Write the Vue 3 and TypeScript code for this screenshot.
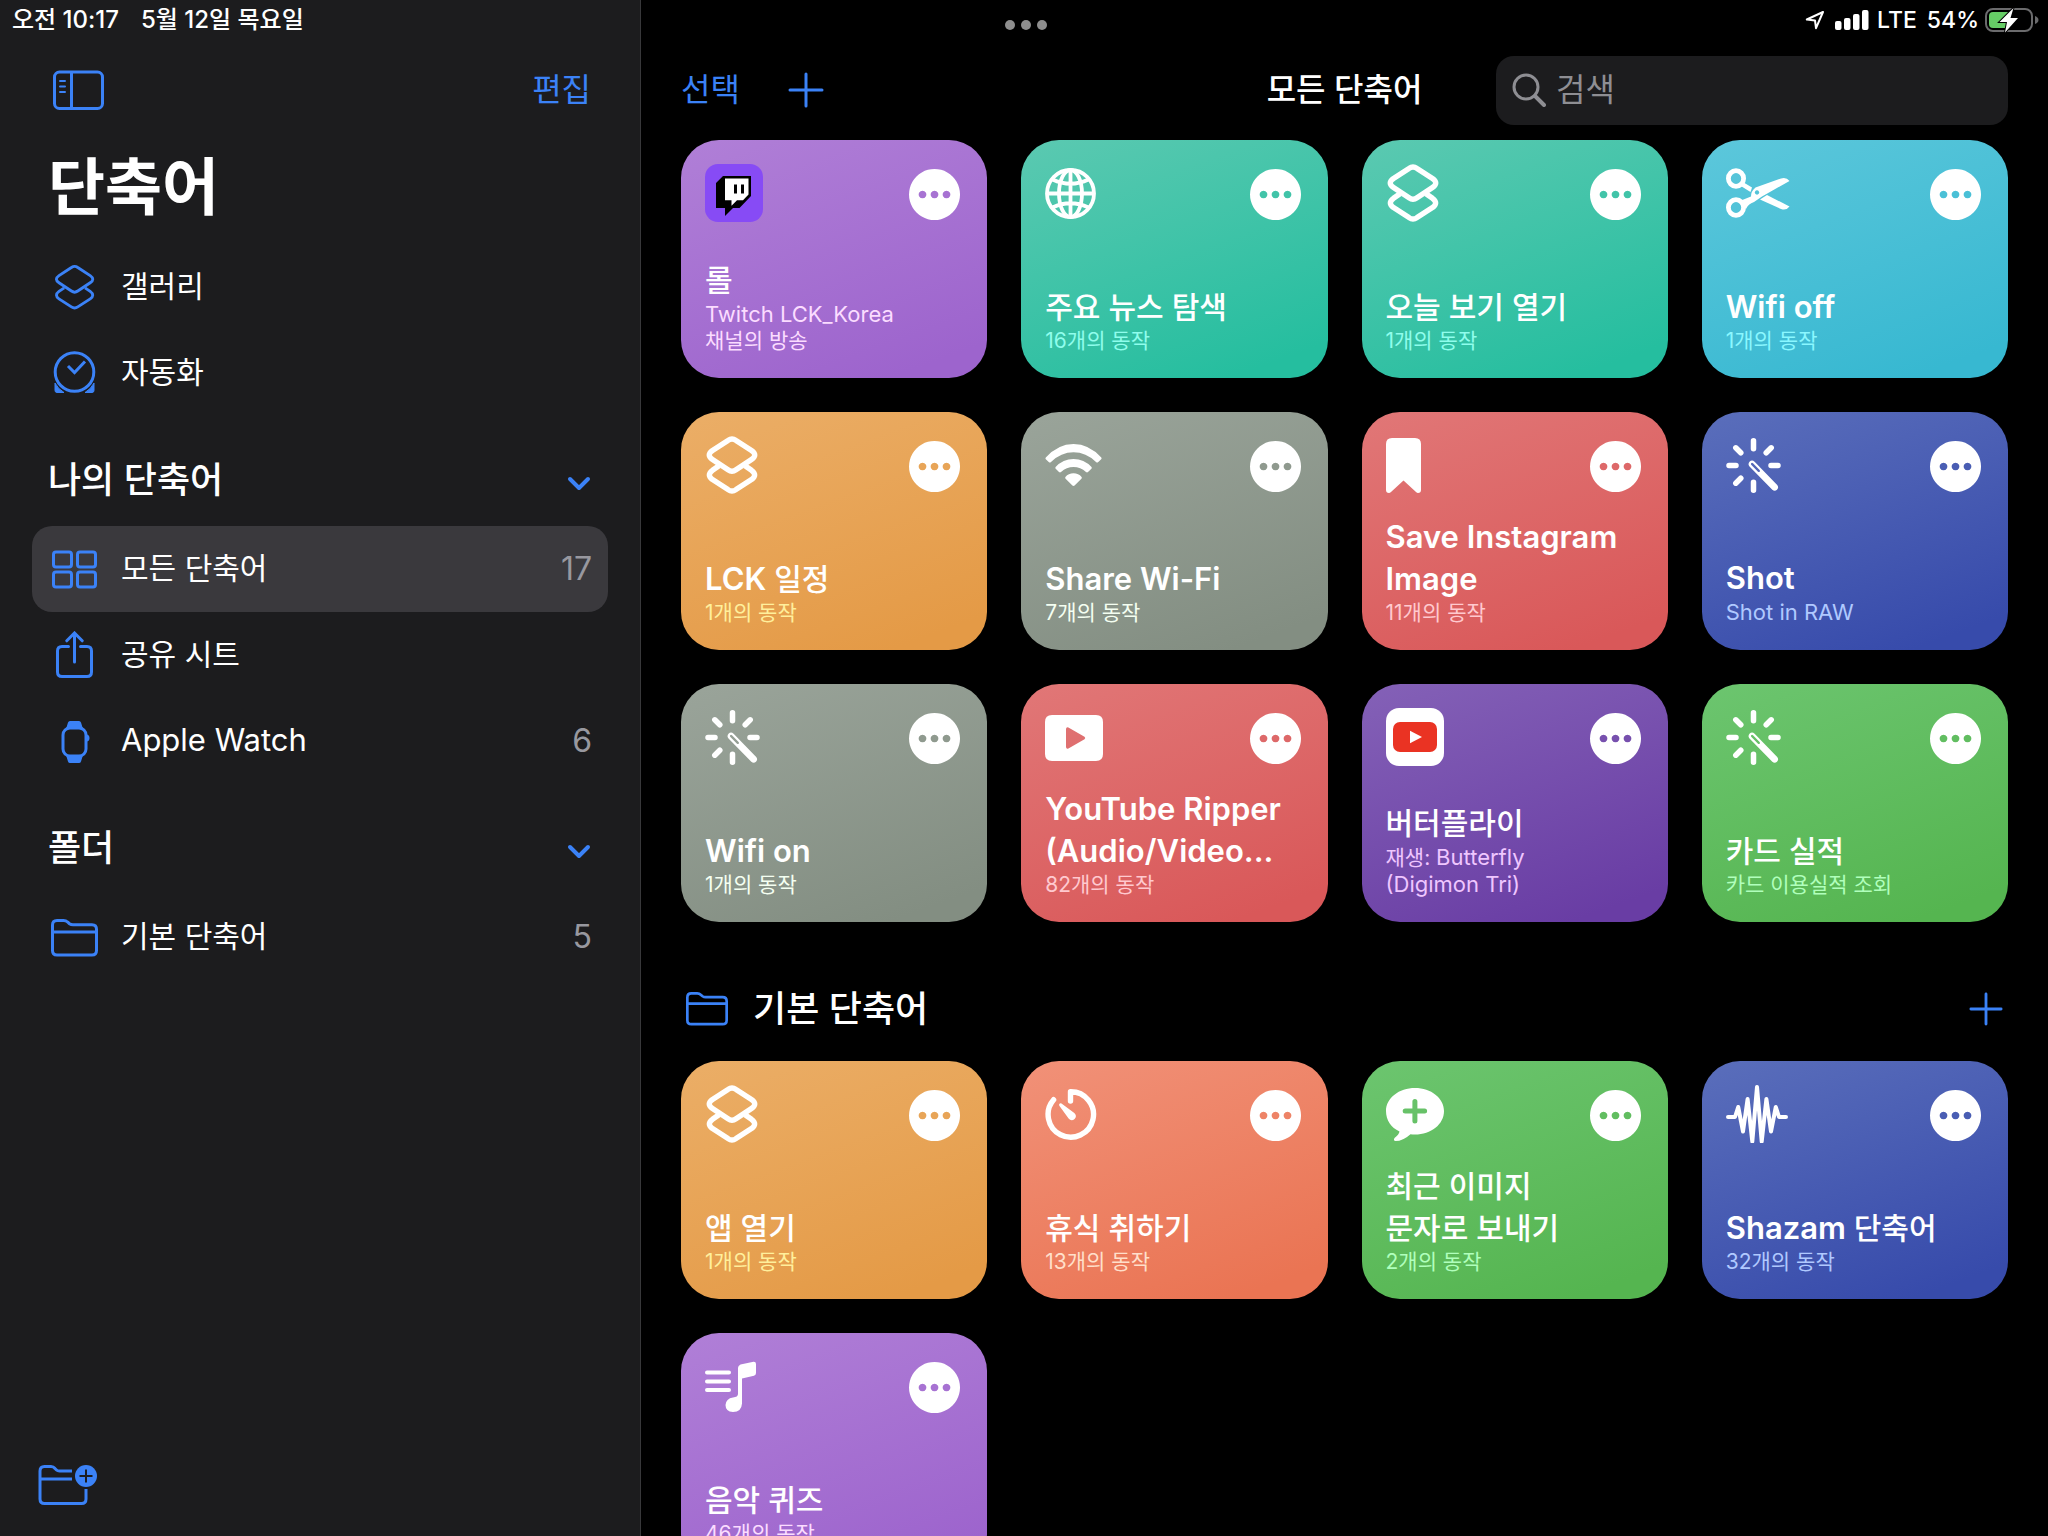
<script setup lang="ts">
import { ref } from 'vue'

interface Shortcut {
  title: string
  subtitle: string
  icon: string
  color: string
}

interface NavItem {
  label: string
  icon: string
  count?: number
  active?: boolean
}

const query = ref('')

// Splits a text into Latin and Hangul runs, which take slightly different sizes.
function runs(text: string): { text: string; latin: boolean }[] {
  return text
    .split(/([A-Za-z(][A-Za-z_()/.\- \n]*)/)
    .filter((part) => part !== '')
    .map((part) => ({ text: part, latin: /^[A-Za-z(]/.test(part) }))
}

const layers =
  '<path d="M23 4.400Q27 1.600 31 4.400L46.500 14.500Q53 19 46.500 23.500L31 33.800Q27 36.600 23 33.800L7.500 23.500Q1 19 7.500 14.500Z"/><path d="M14 29.800L7.500 34.300Q1.200 39 7.500 43.600L23 53.600Q27 56.400 31 53.600L46.500 43.600Q52.800 39 46.500 34.300L40 29.800"/>'

const wandRays =
  '<path d="M27.500 4.800v8M27.500 46.200v8M3 29.500h7M45 29.500h7M9.800 11.800l5 5M45.200 11.800l-5 5M9.800 47.200l5-5" fill="none" stroke="#fff" stroke-width="5.500" stroke-linecap="round"/>'

const cardIcons: Record<string, string> = {
  twitch:
    '<rect width="58" height="58" rx="13" fill="#874bf5"/><path d="M18 12H46V32L34.500 44H28L20 52V44H11V19Z" fill="#000"/><path d="M20 14.500H43.500V30.500L38 36.300H32L26.500 41.800V36.300H20Z" fill="#fff"/><path d="M29 20.500h3v9h-3zM36 20.500h3v9h-3z" fill="#000"/>',
  globe:
    '<g fill="none" stroke="#fff" stroke-width="3.800"><circle cx="25.500" cy="29.500" r="23.500"/><ellipse cx="25.500" cy="29.500" rx="11.500" ry="23.500"/><path d="M25.500 6v47M2 29.500h47M7.500 15.500Q25.500 24 43.500 15.500M7.500 43.500Q25.500 35 43.500 43.500"/></g>',
  layers: `<g fill="none" stroke="#fff" stroke-width="5.400" stroke-linejoin="round">${layers}</g>`,
  scissors:
    '<g fill="none" stroke="#fff" stroke-width="4.800"><ellipse cx="10" cy="14.500" rx="7.600" ry="7.800"/><ellipse cx="10" cy="43.500" rx="7.600" ry="7.800"/></g><path d="M16 17.500L26 23.500L24.500 28L14 21.500Z" fill="#fff"/><path fill-rule="evenodd" d="M15 36.500L25 32.500Q25 27 29.500 23.500L55 14.500Q60.500 13 63.500 17L36 32.500L28 38Q22 40 20 45Z M31 26.300a2.200 2.200 0 1 0 .01 0Z" fill="#fff"/><path d="M34 35.500L41 31L63.500 42.500Q60.500 46.800 55 45Z" fill="#fff"/>',
  wifi:
    '<path d="M.8 21.500Q13 8 28.500 8Q44 8 56.300 21.500Q57 22.500 56.200 23.300L53 26.300Q52 27 51 26Q41 16.300 28.500 16.300Q16 16.300 6 26Q5 27 4 26.300L.8 23.300Q0 22.500 .8 21.500Z M10.600 31Q18 23 28.500 23Q39 23 46.500 31Q47.200 32 46.400 32.800L43 36Q42 36.800 41 36Q35.500 30.900 28.500 30.900Q21.500 30.900 16 36Q15 36.800 14 36L10.700 32.800Q9.900 32 10.600 31Z M20.400 41Q23.500 37.300 28.500 37.300Q33.500 37.300 36.600 41Q37.200 42 36.400 42.800L29.600 49.500Q28.500 50.400 27.400 49.500L20.600 42.800Q19.800 42 20.400 41Z" fill="#fff"/>',
  bookmark:
    '<path d="M6 2H29Q35 2 35 8V54Q35 57 32 57Q31 57 30 56L17.500 44.500L5 56Q4 57 3 57Q0 57 0 54V8Q0 2 6 2Z" fill="#fff"/>',
  wand:
    wandRays +
    '<path fill-rule="evenodd" d="M23.500 25.700Q26 23.400 28.600 25.700L51.200 49Q53.200 51.500 51 53.700Q48.700 55.800 46.300 53.700L23.500 30.600Q21.500 28 23.500 25.700Z M25.200 27.200Q24.600 28 25.200 28.800L32 35.700Q33 36.300 33.700 35.700Q34.300 34.800 33.600 34L27 27.200Q26 26.500 25.200 27.200Z" fill="#fff"/>',
  play:
    '<path fill-rule="evenodd" d="M7 7H51Q58 7 58 14V46Q58 53 51 53H7Q0 53 0 46V14Q0 7 7 7Z M21 21V39Q21.300 41.300 23.400 40.400L39.500 31.300Q41 30 39.500 28.700L23.400 19.600Q21.300 18.700 21 21Z" fill="#fff"/>',
  youtube:
    '<rect width="58" height="58" rx="13" fill="#fff"/><rect x="7" y="14" width="44" height="30" rx="7" fill="#ea3323"/><path d="M24 22.700V35.300L36 29Z" fill="#fff"/>',
  timer:
    '<path d="M8.600 14.700A22.700 22.700 0 1 0 25.500 6.800V16" fill="none" stroke="#fff" stroke-width="5.400" stroke-linecap="round" stroke-linejoin="round"/><path d="M14.200 19.300Q15 17.800 16.500 18.600L29.300 28Q32.400 31 29.600 34Q26.300 36.600 23.600 33.600L14.500 21Q13.800 20 14.200 19.300Z" fill="#fff"/>',
  message:
    '<path fill-rule="evenodd" d="M29 3C45 3 58 13 58 26C58 39.500 45 49.500 29 49.500Q26.500 49.500 24.500 49.200Q17 56 9.500 56Q7 55.500 8.500 53Q13 49.500 13.500 46.500C5 42.500 0 35 0 26C0 13 13 3 29 3Z M26.400 16.500V23.500H19.200A2.500 2.500 0 0 0 19.200 28.500H26.400V36A2.500 2.500 0 0 0 31.400 36V28.500H38.600A2.500 2.500 0 0 0 38.600 23.500H31.400V16.500A2.500 2.500 0 0 0 26.400 16.500Z" fill="#fff"/>',
  wave:
    '<path d="M2 32H9L12.200 22L17 46.500L21.600 14L26.300 56.500L31 2L35.700 56.500L40.400 14L45 46.500L49.800 22L53 32H60" fill="none" stroke="#fff" stroke-width="4" stroke-linecap="round" stroke-linejoin="round"/>',
  music:
    '<path d="M2 15.500H24M2 24.500H24M2 33H24" stroke="#fff" stroke-width="4" stroke-linecap="round"/><path d="M33 11Q33 8.500 35.500 7.500L48.500 4.700Q51 4.500 51 7V16Q51 18 49 18.700L37 21.500V46.500Q36.500 55 28 55Q20.500 54.500 20.500 48Q21 41.500 28 40.500Q33 40 33 37Z" fill="#fff"/>',
}

const folder =
  '<path d="M1.500 32V6Q1.500 1.500 6 1.500H12.500Q15 1.500 16.500 3L18.500 4.700Q20 5.800 22 5.800H41Q45.500 5.800 45.500 10.300V31.500Q45.500 36 41 36H6Q1.500 36 1.500 31.500ZM1.500 13H45.500"/>'

const navIcons: Record<string, string> = {
  gallery: `<g transform="translate(2 1) scale(.8)" stroke-width="3.600">${layers}</g>`,
  clock:
    '<circle cx="23.500" cy="23" r="19.300"/><path d="M17 17L23.500 23.500L34 12.500"/><path d="M4 34Q7 40 13 43.500H6Q4 43.500 4 41.500ZM43 34Q40 40 34 43.500H41Q43 43.500 43 41.500Z" fill="#3b82f7" stroke-width="1"/>',
  grid:
    '<rect x="2.500" y="7" width="18" height="15" rx="2.500"/><rect x="26.500" y="7" width="18" height="15" rx="2.500"/><rect x="2.500" y="27" width="18" height="15" rx="2.500"/><rect x="26.500" y="27" width="18" height="15" rx="2.500"/>',
  share:
    '<path d="M17.500 15.500H11Q6.500 15.500 6.500 20V41Q6.500 45.500 11 45.500H36Q40.500 45.500 40.500 41V20Q40.500 15.500 36 15.500H29.500M23.500 31V3M15.800 9.800L23.500 2L31.200 9.800" stroke-linecap="round"/>',
  watch:
    '<rect x="12" y="11" width="23" height="28" rx="7"/><path d="M15 12L17 5.500Q17.500 4 19 4H28Q29.500 4 30 5.500L32 12ZM15 38L17 44.500Q17.500 46 19 46H28Q29.500 46 30 44.500L32 38ZM36 17.500Q38.500 18 38.500 21Q38.500 24 36 24.500Z" fill="#3b82f7" stroke="none"/>',
  folder: `<g transform="translate(0 6)">${folder}</g>`,
}

const primaryNav: NavItem[] = [
  { label: '갤러리', icon: 'gallery' },
  { label: '자동화', icon: 'clock' },
]

const groups: { title: string; items: NavItem[] }[] = [
  {
    title: '나의 단축어',
    items: [
      { label: '모든 단축어', icon: 'grid', count: 17, active: true },
      { label: '공유 시트', icon: 'share' },
      { label: 'Apple Watch', icon: 'watch', count: 6 },
    ],
  },
  { title: '폴더', items: [{ label: '기본 단축어', icon: 'folder', count: 5 }] },
]

const shortcuts: Shortcut[] = [
  { title: '롤', subtitle: 'Twitch LCK_Korea\n채널의 방송', icon: 'twitch', color: 'purple' },
  { title: '주요 뉴스 탐색', subtitle: '16개의 동작', icon: 'globe', color: 'teal' },
  { title: '오늘 보기 열기', subtitle: '1개의 동작', icon: 'layers', color: 'teal' },
  { title: 'Wifi off', subtitle: '1개의 동작', icon: 'scissors', color: 'cyan' },
  { title: 'LCK 일정', subtitle: '1개의 동작', icon: 'layers', color: 'orange' },
  { title: 'Share Wi-Fi', subtitle: '7개의 동작', icon: 'wifi', color: 'gray' },
  { title: 'Save Instagram\nImage', subtitle: '11개의 동작', icon: 'bookmark', color: 'red' },
  { title: 'Shot', subtitle: 'Shot in RAW', icon: 'wand', color: 'blue' },
  { title: 'Wifi on', subtitle: '1개의 동작', icon: 'wand', color: 'gray' },
  { title: 'YouTube Ripper\n(Audio/Video...', subtitle: '82개의 동작', icon: 'play', color: 'red' },
  { title: '버터플라이', subtitle: '재생: Butterfly\n(Digimon Tri)', icon: 'youtube', color: 'violet' },
  { title: '카드 실적', subtitle: '카드 이용실적 조회', icon: 'wand', color: 'green' },
]

const starters: Shortcut[] = [
  { title: '앱 열기', subtitle: '1개의 동작', icon: 'layers', color: 'orange' },
  { title: '휴식 취하기', subtitle: '13개의 동작', icon: 'timer', color: 'salmon' },
  { title: '최근 이미지\n문자로 보내기', subtitle: '2개의 동작', icon: 'message', color: 'green' },
  { title: 'Shazam 단축어', subtitle: '32개의 동작', icon: 'wave', color: 'blue' },
  { title: '음악 퀴즈', subtitle: '46개의 동작', icon: 'music', color: 'purple' },
]

const sections = [
  { name: '', items: shortcuts },
  { name: '기본 단축어', items: starters },
]
</script>

<template>
  <div class="app">
    <div class="status">
      <div class="status-left">
        <span>오전 10:17</span>
        <span>5월 12일 목요일</span>
      </div>
      <button class="multitask" type="button" aria-label="멀티태스킹">
        <i></i><i></i><i></i>
      </button>
      <div class="status-right">
        <svg width="20" height="20" viewBox="0 0 20 20" fill="none" stroke="#fff" stroke-width="2" stroke-linejoin="round">
          <path d="M18 2L1.800 9.500L10 10.500L11 18.200Z" />
        </svg>
        <svg class="bars" width="34" height="20" viewBox="0 0 34 20" fill="#fff">
          <rect x="0" y="11" width="6.500" height="9" rx="2" />
          <rect x="9" y="8" width="6.500" height="12" rx="2" />
          <rect x="18" y="4" width="6.500" height="16" rx="2" />
          <rect x="27" y="0" width="6.500" height="20" rx="2" />
        </svg>
        <span>LTE</span>
        <span class="percent">54%</span>
        <svg width="54" height="26" viewBox="0 0 54 26">
          <rect x="1" y="2" width="46" height="22" rx="7" fill="none" stroke="#6b6b6d" stroke-width="2" />
          <path d="M50 9Q53.500 10.500 53.500 13Q53.500 15.500 50 17Z" fill="#6b6b6d" />
          <rect x="4" y="5" width="22" height="16" rx="4" fill="#66cc66" />
          <path d="M28.500 1L14.500 15H22L20 25.500L33 11H25.500Z" fill="#fff" stroke="#000" stroke-width="2" paint-order="stroke" />
        </svg>
      </div>
    </div>

    <aside class="sidebar">
      <div class="side-bar">
        <button type="button" aria-label="사이드바">
          <svg width="51" height="40" viewBox="0 0 51 40" fill="none" stroke="#3b82f7" stroke-width="3">
            <rect x="1.500" y="2" width="48" height="36.500" rx="5" />
            <path d="M18.500 2.500V38" />
            <path d="M7 11H12M7 16.500H12M7 22H12" stroke-width="2" stroke-linecap="round" />
          </svg>
        </button>
        <button type="button">편집</button>
      </div>
      <h1>단축어</h1>
      <nav>
        <a v-for="item in primaryNav" :key="item.label" href="#" class="row">
          <svg class="row-icon" viewBox="0 0 47 49" v-html="navIcons[item.icon]"></svg>
          <span class="label">{{ item.label }}</span>
        </a>
        <template v-for="group in groups" :key="group.title">
          <div class="group-head">
            <h2>{{ group.title }}</h2>
            <button type="button" :aria-label="group.title">
              <svg width="24" height="22" viewBox="0 0 24 22" fill="none" stroke="#3b82f7" stroke-width="4" stroke-linecap="round" stroke-linejoin="round">
                <path d="M3 10L12 19L21 10" />
              </svg>
            </button>
          </div>
          <a v-for="item in group.items" :key="item.label" href="#" class="row" :class="{ active: item.active }">
            <svg class="row-icon" viewBox="0 0 47 49" v-html="navIcons[item.icon]"></svg>
            <span class="label">
              <span v-for="run in runs(item.label)" :key="run.text" :class="{ latin: run.latin }">{{ run.text }}</span>
            </span>
            <span class="count">{{ item.count }}</span>
          </a>
        </template>
      </nav>
      <button class="new-folder" type="button" aria-label="새로운 폴더">
        <svg width="60" height="42" viewBox="0 0 60 42" fill="none" stroke="#3b82f7" stroke-width="3">
          <path d="M48 25V35Q48 39.500 43.500 39.500H6.500Q2 39.500 2 35V7Q2 2.500 6.500 2.500H13Q15.500 2.500 17 4.500L18.500 6Q19.500 7 21.500 7H34M2 15H34" />
          <circle cx="48" cy="12" r="11" fill="#3b82f7" stroke="none" />
          <path d="M48 5.500V18.500M41.500 12H54.500" stroke="#1c1c1e" stroke-width="2" />
        </svg>
      </button>
    </aside>

    <main class="main">
      <header class="toolbar">
        <div class="actions">
          <button type="button">선택</button>
          <button type="button" aria-label="추가">
            <svg width="36" height="36" viewBox="0 0 36 36" stroke="#3b82f7" stroke-width="3" stroke-linecap="round">
              <path d="M18 2V34M2 18H34" />
            </svg>
          </button>
        </div>
        <h2>모든 단축어</h2>
        <label class="search">
          <svg width="34" height="34" viewBox="0 0 34 34" fill="none" stroke="#8e8e93" stroke-width="3" stroke-linecap="round">
            <circle cx="14" cy="14" r="12" />
            <path d="M23 23L32 32" stroke-width="4" />
          </svg>
          <input v-model="query" type="text" placeholder="검색" aria-label="검색" />
        </label>
      </header>

      <section v-for="section in sections" :key="section.name">
        <div v-if="section.name" class="section-head">
          <svg width="42" height="34" viewBox="0 0 47 38" fill="none" stroke="#3b82f7" stroke-width="3" v-html="folder"></svg>
          <h3>{{ section.name }}</h3>
          <button type="button" aria-label="추가">
            <svg width="34" height="34" viewBox="0 0 36 36" stroke="#3b82f7" stroke-width="3" stroke-linecap="round">
              <path d="M18 2V34M2 18H34" />
            </svg>
          </button>
        </div>
        <div class="cards">
          <article v-for="card in section.items" :key="card.title" class="card" :class="card.color">
            <div class="card-top">
              <svg class="card-icon" viewBox="0 0 64 58" v-html="cardIcons[card.icon]"></svg>
              <button type="button" aria-label="더 보기">
                <svg width="51" height="51" viewBox="0 0 51 51" fill="#fff" fill-rule="evenodd">
                  <path d="M25.500 0a25.500 25.500 0 1 0 .01 0ZM13.500 21.700a3.800 3.800 0 1 0 .01 0ZM25.500 21.700a3.800 3.800 0 1 0 .01 0ZM37.500 21.700a3.800 3.800 0 1 0 .01 0Z" />
                </svg>
              </button>
            </div>
            <h4><span v-for="run in runs(card.title)" :key="run.text" :class="{ latin: run.latin }">{{ run.text }}</span></h4>
            <p><span v-for="run in runs(card.subtitle)" :key="run.text" :class="{ latin: run.latin }">{{ run.text }}</span></p>
          </article>
        </div>
      </section>
    </main>
  </div>
</template>

<style>
body {
  background: #000;
}
</style>

<style scoped>
.app {
  position: relative;
  display: grid;
  grid-template-columns: minmax(320px, 31.3%) 1fr;
  height: 100vh;
  overflow: hidden;
  color: #fff;
  background: #000;
  font-family: Inter, "Noto Sans CJK KR", sans-serif;
}

* {
  box-sizing: border-box;
}

button {
  display: flex;
  padding: 0;
  border: 0;
  background: none;
  color: #3b82f7;
  font: inherit;
  font-size: 32px;
  line-height: 40px;
}

h1, h2, h3, h4, p {
  margin: 0;
}

svg {
  flex: none;
}

.status {
  position: absolute;
  top: 0;
  left: 0;
  right: 0;
  display: grid;
  grid-template-columns: 1fr auto 1fr;
  align-items: center;
  height: 40px;
  padding: 0 9px 0 12px;
  font-size: 23px;
  font-weight: 500;
  line-height: 40px;
}

.status-left {
  display: flex;
  gap: 22px;
  font-size: 24px;
}

.status-right {
  display: flex;
  align-items: center;
  justify-content: flex-end;
}

.bars {
  margin: 0 8px 0 10px;
}

.percent {
  margin: 0 6px 0 10px;
}

.multitask {
  gap: 6px;
  padding-top: 10px;
}

.multitask i {
  width: 10px;
  height: 10px;
  border-radius: 50%;
  background: #8e8e8e;
}

.sidebar {
  display: flex;
  flex-direction: column;
  padding: 40px 32px 30px;
  border-right: 1px solid #38383a;
  background: #1c1c1e;
}

.side-bar {
  display: flex;
  align-items: center;
  justify-content: space-between;
  height: 100px;
  padding: 0 17px 0 21px;
}

h1 {
  height: 104px;
  padding-left: 16px;
  font-size: 62px;
  font-weight: 700;
  line-height: 96px;
}

.row {
  display: flex;
  align-items: center;
  height: 86px;
  padding: 0 16px 0 19px;
  border-radius: 20px;
  color: #fff;
  font-size: 30px;
  line-height: 40px;
  text-decoration: none;
}

.row.active {
  background: #3a393d;
}

.row-icon {
  width: 47px;
  height: 49px;
  margin-right: 23px;
  fill: none;
  stroke: #3b82f7;
  stroke-width: 3px;
}

.label {
  flex: 1;
  padding-bottom: 2px;
}

.label .latin {
  font-size: 31px;
}

.count {
  color: #98989f;
  font-size: 32px;
}

.group-head {
  display: flex;
  align-items: center;
  justify-content: space-between;
  height: 110px;
  padding: 18px 17px 0 16px;
}

.group-head h2 {
  font-size: 36px;
  font-weight: 500;
  line-height: 48px;
}

.new-folder {
  margin-top: auto;
  margin-left: 6px;
}

.main {
  min-width: 0;
  padding: 40px 40px 0;
  overflow: hidden;
}

.toolbar {
  display: grid;
  grid-template-columns: 1fr auto 1fr;
  align-items: center;
  height: 100px;
}

.toolbar h2 {
  font-size: 32px;
  font-weight: 500;
  line-height: 40px;
}

.actions {
  display: flex;
  align-items: center;
  gap: 48px;
}

.search {
  display: flex;
  align-items: center;
  justify-self: end;
  gap: 10px;
  width: 512px;
  height: 69px;
  padding: 0 16px;
  border-radius: 18px;
  background: #1c1c1e;
}

.search input {
  flex: 1;
  min-width: 0;
  padding: 0;
  border: 0;
  outline: 0;
  background: none;
  color: #fff;
  font: inherit;
  font-size: 32px;
  line-height: 40px;
}

.search input::placeholder {
  color: #8e8e93;
}

.section-head {
  display: flex;
  align-items: center;
  height: 139px;
  padding: 34px 5px 0;
}

.section-head h3 {
  flex: 1;
  margin-left: 25px;
  font-size: 36px;
  font-weight: 500;
  line-height: 48px;
}

.cards {
  display: grid;
  grid-template-columns: repeat(4, 1fr);
  gap: 34px;
}

.card {
  display: flex;
  flex-direction: column;
  min-height: 238px;
  padding: 24px;
  border-radius: 38px;
  background: linear-gradient(160deg, var(--from), var(--to) 90%);
}

.card-top {
  display: flex;
  align-items: center;
  justify-content: space-between;
  height: 60px;
  margin-bottom: auto;
  padding-right: 3px;
}

.card-icon {
  align-self: flex-start;
  width: 64px;
  height: 58px;
}

.card h4 {
  font-size: 30px;
  font-weight: 500;
  line-height: 42px;
  white-space: pre-line;
}

.card h4 .latin {
  font-size: 31px;
  font-weight: 600;
}

.card p {
  color: var(--note);
  font-size: 21px;
  line-height: 26px;
  white-space: pre-line;
}

.card p .latin {
  font-size: 22px;
}

.purple { --from: #b07fd7; --to: #9d64cd; --note: #fbdcff; }
.teal { --from: #5bc9b1; --to: #25be9f; --note: #8ffdec; }
.cyan { --from: #5cc7db; --to: #37b8d1; --note: #8af7ff; }
.orange { --from: #ebae67; --to: #e49a46; --note: #ffef9c; }
.gray { --from: #9aa49a; --to: #838e82; --note: #f4fff1; }
.red { --from: #e17777; --to: #d95859; --note: #ffc9cf; }
.blue { --from: #5a6ebb; --to: #374bab; --note: #b0c9ff; }
.violet { --from: #8461b7; --to: #693da4; --note: #efc6ff; }
.green { --from: #6cc56f; --to: #55b550; --note: #b0ffbc; }
.salmon { --from: #f19178; --to: #ea7453; --note: #ffdfca; }
</style>
